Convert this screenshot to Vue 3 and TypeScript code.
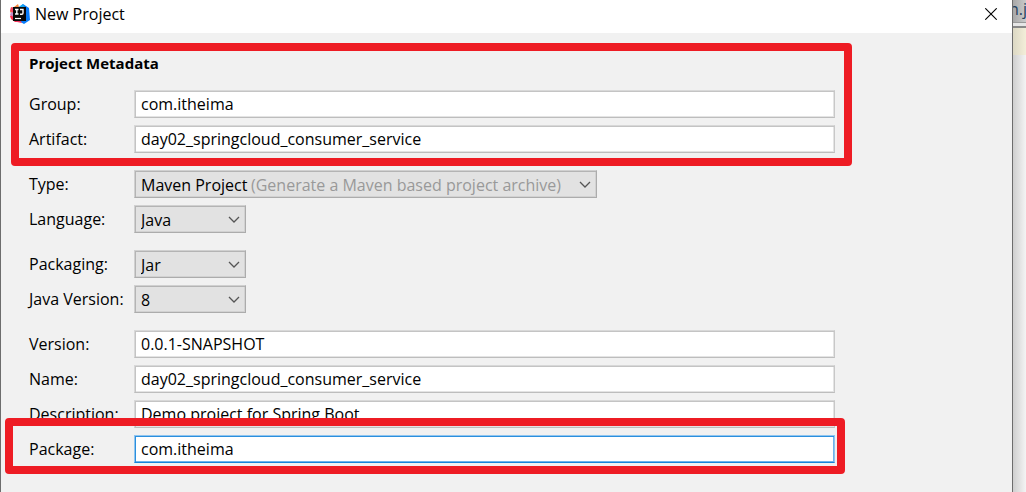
<script setup lang="ts">
import { ref } from 'vue'

const group = ref('com.itheima')
const artifact = ref('day02_springcloud_consumer_service')
const projectType = ref('Maven Project')
const language = ref('Java')
const packaging = ref('Jar')
const javaVersion = ref('8')
const version = ref('0.0.1-SNAPSHOT')
const projectName = ref('day02_springcloud_consumer_service')
const description = ref('Demo project for Spring Boot')
const packageName = ref('com.itheima')
</script>

<template>
  <div class="desktop">
    <main class="dialog">
      <header class="titlebar">
        <svg class="logo" viewBox="0 0 20 20" aria-hidden="true">
          <path d="M1 4 4 3 8 0 10 6 5 12 0 8Z" fill="#f6873b" />
          <path d="M1 3 5 4 5 10 0 7Z" fill="#f5455f" />
          <path d="M0 12 5 8 8 18 5 18 1 15Z" fill="#f9304d" />
          <path d="M1 8 5 9 4 13 0 11Z" fill="#c78ac8" />
          <path d="M9 3 13 0 19 4 20 16 14 20 7 16Z" fill="#087cfa" />
          <path d="M9 3 13 0 15 4Z" fill="#16a8ed" />
          <path d="M4 16 10 16 12 19 7 18Z" fill="#ef3564" />
          <rect x="3" y="3" width="13" height="14" fill="#080808" />
          <path d="M5 5.5H8.5M6.8 5.5V10M5 10H8.5M10 5.5H13V9Q13 10.2 11.8 10.2H10" fill="none" stroke="#fff" stroke-width="1.4" />
          <path d="M5 14.5H11" stroke="#fff" stroke-width="1.2" />
        </svg>
        <h1 class="title">New Project</h1>
        <button class="close" type="button" aria-label="Close">
          <svg viewBox="0 0 12 12" aria-hidden="true"><path d="M0.3 0.3 11.7 11.7M11.7 0.3 0.3 11.7" /></svg>
        </button>
      </header>

      <form class="form" @submit.prevent>
        <section class="block metadata">
          <h2 class="heading">Project Metadata</h2>
          <div class="row"><label for="group">Group:</label><input id="group" v-model="group" type="text" /></div>
          <div class="row"><label for="artifact">Artifact:</label><input id="artifact" v-model="artifact" type="text" /></div>
          <div class="marker marker-top"></div>
        </section>

        <section class="block">
          <div class="row">
            <label for="type">Type:</label>
            <div class="combo wide">
              <select id="type" v-model="projectType" aria-describedby="type-hint"><option>Maven Project</option></select>
              <span id="type-hint" class="hint">(Generate a Maven based project archive)</span>
              <svg class="chevron" viewBox="0 0 12 7" aria-hidden="true"><path d="M1 1 6 6 11 1" /></svg>
            </div>
          </div>
          <div class="row">
            <label for="language">Language:</label>
            <div class="combo">
              <select id="language" v-model="language"><option>Java</option></select>
              <svg class="chevron" viewBox="0 0 12 7" aria-hidden="true"><path d="M1 1 6 6 11 1" /></svg>
            </div>
          </div>
        </section>

        <section class="block">
          <div class="row">
            <label for="packaging">Packaging:</label>
            <div class="combo">
              <select id="packaging" v-model="packaging"><option>Jar</option></select>
              <svg class="chevron" viewBox="0 0 12 7" aria-hidden="true"><path d="M1 1 6 6 11 1" /></svg>
            </div>
          </div>
          <div class="row">
            <label for="java-version">Java Version:</label>
            <div class="combo">
              <select id="java-version" v-model="javaVersion"><option>8</option></select>
              <svg class="chevron" viewBox="0 0 12 7" aria-hidden="true"><path d="M1 1 6 6 11 1" /></svg>
            </div>
          </div>
        </section>

        <section class="block">
          <div class="row"><label for="version">Version:</label><input id="version" v-model="version" type="text" /></div>
          <div class="row"><label for="name">Name:</label><input id="name" v-model="projectName" type="text" /></div>
          <div class="row"><label for="description">Description:</label><input id="description" v-model="description" type="text" /></div>
          <div class="row package">
            <label for="package">Package:</label><input id="package" v-model="packageName" class="active" type="text" />
            <div class="marker marker-bottom"></div>
          </div>
        </section>
      </form>
    </main>

    <aside class="behind">
      <div class="tab">n.j</div>
      <div class="strip"></div>
      <div class="editor-line"></div>
    </aside>
  </div>
</template>

<style>
body {
  background: #f1f1f1;
}
</style>

<style scoped>
.desktop {
  display: grid;
  grid-template-columns: 1fr 14px;
  min-height: 100vh;
  overflow: hidden;
  font-family: "Open Sans", "Noto Sans", sans-serif;
  font-size: 16px;
  line-height: 20px;
  color: #000;
}

.dialog {
  background: #f1f1f1;
  border-left: 1px solid #6d6d6d;
}

.titlebar {
  display: flex;
  align-items: center;
  height: 33px;
  padding: 0 15px 5px 9px;
  box-sizing: border-box;
  background: #fff;
}

.logo {
  width: 20px;
  height: 20px;
}

.title {
  flex: 1;
  margin: 0 0 0 5px;
  font-size: 16px;
  font-weight: 400;
}

.close {
  display: flex;
  padding: 0;
  border: 0;
  background: none;
}

.close svg {
  width: 12px;
  height: 12px;
  fill: none;
  stroke: #000;
  stroke-width: 1.1;
}

.form {
  display: flex;
  flex-direction: column;
  gap: 17px;
  padding: 20px 177px 29px 28px;
}

.block {
  display: flex;
  flex-direction: column;
  gap: 7px;
}

.metadata,
.package {
  position: relative;
}

.heading {
  margin: 0 0 10px;
  font-size: 15px;
  font-weight: 700;
}

.row {
  display: grid;
  grid-template-columns: 105px minmax(0, 1fr);
}

label {
  height: 28px;
  line-height: 28px;
  white-space: nowrap;
}

input,
select {
  box-sizing: border-box;
  width: 100%;
  height: 28px;
  margin: 0;
  border: 1px solid;
  border-radius: 0;
  color: #000;
  font: inherit;
  outline: none;
}

input {
  padding: 0 6px;
  border-color: #d8d8d8 #c8c8c8 #bdbdbd #d8d8d8;
  background: #fff;
  box-shadow: inset 1px 1px #c4c4c4, inset -1px -1px #e4e4e4;
}

input.active {
  border-color: #8fc5f0 #8fc5f0 #1683d8 #8fc5f0;
  box-shadow: inset 1px 1px #2b8fdd, inset -1px -1px #6fb3ea;
}

.combo {
  position: relative;
  width: 112px;
}

.combo.wide {
  width: 463px;
}

select {
  appearance: none;
  padding: 2px 26px 0 6px;
  border-color: #d0d0d0 #acacac #acacac #d0d0d0;
  background: #e2e2e2;
  box-shadow: inset 1px 1px #b4b4b4, inset -1px -1px #d2d2d2;
}

.hint {
  position: absolute;
  top: 5px;
  left: 117px;
  color: #999;
  white-space: nowrap;
  pointer-events: none;
}

.chevron {
  position: absolute;
  top: 11px;
  right: 6px;
  width: 12px;
  height: 7px;
  fill: none;
  stroke: #555;
  stroke-width: 1.3;
  pointer-events: none;
}

.marker {
  position: absolute;
  border: 8px solid #ee1c24;
  border-radius: 4px;
  pointer-events: none;
}

.marker-top {
  inset: -10px -17px -13px -18px;
}

.marker-bottom {
  inset: -17px -10px -11px -24px;
}

.behind {
  overflow: hidden;
  border-left: 1px solid #6d6d6d;
  background: linear-gradient(90deg, #cfcfcf, #f4f4f4);
}

.tab {
  height: 22px;
  overflow: hidden;
  background: linear-gradient(90deg, #a8a8a8, #cacaca);
  color: #24405f;
  line-height: 18px;
  text-indent: -4px;
  white-space: nowrap;
}

.strip {
  height: 3px;
  border-top: 1px solid #999;
  border-bottom: 2px solid #888;
  background: #e6e6e6;
}

.editor-line {
  height: 27px;
  background: linear-gradient(90deg, #dcd8c4, #f3eed9);
}
</style>
